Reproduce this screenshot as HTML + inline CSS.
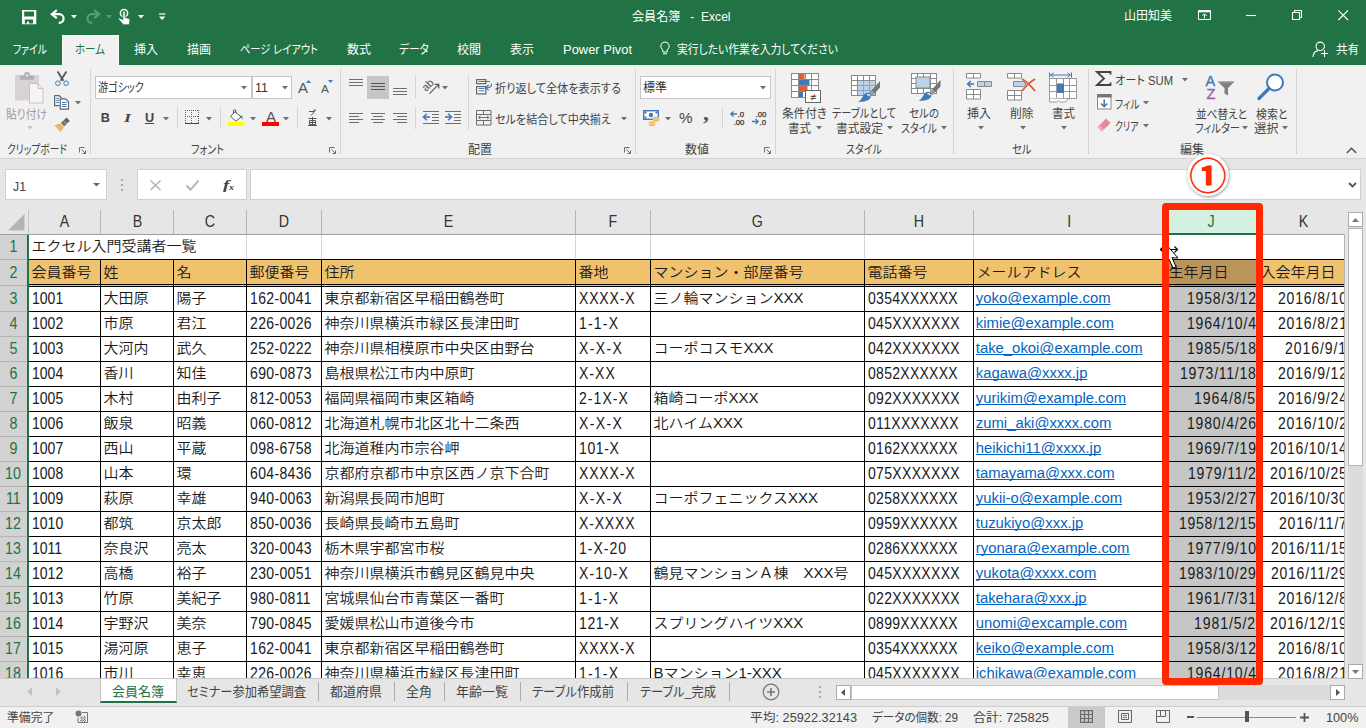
<!DOCTYPE html>
<html lang="ja"><head><meta charset="utf-8"><title>会員名簿 - Excel</title>
<style>
html,body{margin:0;padding:0}
body{width:1366px;height:728px;overflow:hidden;position:relative;background:#e6e6e6;font-family:"Liberation Sans","Noto Sans CJK JP",sans-serif;font-size:12px;color:#444}
.a{position:absolute;display:block}
.t{position:absolute;white-space:pre;transform-origin:0 50%;display:block;font-feature-settings:"palt"}
.k{display:inline-block;white-space:nowrap;vertical-align:baseline;text-align:left}
.k>span{display:inline-block;transform-origin:0 50%}
svg{overflow:visible}

#grid{position:absolute;left:0;top:210px;width:1344px;height:468px;overflow:hidden;background:#fff;font-family:"Liberation Sans","Noto Sans CJK JP",sans-serif;font-size:15px;color:#1a1a1a;font-weight:350}
#grid div{position:absolute;box-sizing:border-box;white-space:pre;overflow:hidden}
.ch{background:#e6e6e6;border-right:1px solid #b5b5b5;border-bottom:1px solid #9e9e9e;text-align:center;color:#333;font-size:15px;font-weight:400}
.rh{background:#d2d2d2;border-bottom:1px solid #b5b5b5;text-align:center;color:#217346;font-size:15px;font-weight:400;left:0;width:27px}
.c{border-right:1px solid #000;border-bottom:1px solid #000;padding-left:2.5px}
.h2{background:#f1c26e}
.r{text-align:right;padding-right:0.6px;padding-left:0}
.j{display:inline-block;transform:scaleY(.93);transform-origin:50% 58%}
.l{display:inline-block;font-size:16.2px;transform:scaleX(.866);transform-origin:0 50%;position:relative;top:0.4px}
.hy{display:inline-block;transform:scaleX(1.45)}
.sl{display:inline-block;transform:scaleX(1.5)}
.lc{display:inline-block;font-size:16.2px;transform:scaleX(.88)}
.lk{color:#0563c1}
.e{font-size:14.9px;text-decoration:underline;text-decoration-thickness:1px;text-underline-offset:0.9px;text-decoration-skip-ink:none;position:relative;top:0.3px;left:-0.7px;font-size:14.85px}
.sel{background:#c6c6c6}
</style></head>
<body>
<div class="a" style="left:0px;top:0px;width:1366px;height:65px;background:#217346;"></div>
<svg class="a" style="left:22px;top:9.7px;" width="14.3" height="14.3" viewBox="0 0 14.3 14.3"><path d="M0 0h14.300v14.300h-14.300z M2.200 1.600v5h9.800v-5z M2.800 9.500v3.900h2.200v-2h2v2h4v-3.900z" fill="#fff" fill-rule="evenodd"/></svg>
<svg class="a" style="left:50px;top:9px;" width="16" height="15" viewBox="0 0 16 15"><path d="M6.800 1.200L1.800 5.200L6.800 9.200" fill="none" stroke="#fff" stroke-width="2.200" stroke-linejoin="miter"/><path d="M3 5.200h6.300a4.300 4.300 0 0 1 0 8.600h-0.600" fill="none" stroke="#fff" stroke-width="2.200"/></svg>
<svg class="a" style="left:70.7px;top:14.8px;" width="6" height="4" viewBox="0 0 6 4"><path d="M0 0h6l-3.0 3.5z" fill="#fff"/></svg>
<svg class="a" style="left:85px;top:9px;" width="16" height="15" viewBox="0 0 16 15"><path d="M9.200 1.200L14.200 5.200L9.200 9.200" fill="none" stroke="#5b9a77" stroke-width="2.200"/><path d="M13 5.200h-6.300a4.300 4.300 0 0 0 0 8.600h0.600" fill="none" stroke="#5b9a77" stroke-width="2.200"/></svg>
<svg class="a" style="left:105.6px;top:14.8px;" width="6" height="4" viewBox="0 0 6 4"><path d="M0 0h6l-3.0 3.5z" fill="#5b9a77"/></svg>
<svg class="a" style="left:117px;top:8px;" width="14" height="18" viewBox="0 0 14 18"><circle cx="7" cy="5.2" r="3.6" fill="none" stroke="#fff" stroke-width="1.5"/><path d="M5.8 4.2a1.2 1.2 0 0 1 2.4 0v5.2l3.6 1.1c.8.3 1.2.9 1.1 1.7l-.6 4.6h-6l-4.6-5.6c-.4-.6.2-1.4 1-1.1l3.1 1.6z" fill="#fff" stroke="#217346" stroke-width="0.8"/></svg>
<svg class="a" style="left:137.7px;top:14.8px;" width="6" height="4" viewBox="0 0 6 4"><path d="M0 0h6l-3.0 3.5z" fill="#fff"/></svg>
<svg class="a" style="left:158px;top:13px;" width="8" height="8" viewBox="0 0 8 8"><path d="M1 1h6.4" stroke="#fff" stroke-width="1.2"/><path d="M1 3.5h6.4l-3.2 3.4z" fill="#fff"/></svg>
<span id="L0" class="t" style="left:632px;top:4.600000000000001px;height:24.4px;line-height:24.4px;font-size:12.2px;color:#fff;transform:scaleX(0.990);">会員名簿   -  Excel</span>
<span id="L1" class="t" style="left:1124px;top:3.5px;height:24px;line-height:24px;font-size:12px;color:#fff;">山田知美</span>
<svg class="a" style="left:1198px;top:10px;" width="13" height="10" viewBox="0 0 13 10"><path d="M0.500 0.500h12v9h-12z" fill="none" stroke="#fff"/><path d="M0.500 1.500h12" stroke="#fff" stroke-width="1.600"/><path d="M6.500 8.500v-4.500 M4.300 6l2.200-2.200l2.200 2.200" fill="none" stroke="#fff"/></svg>
<svg class="a" style="left:1246px;top:15px;" width="10" height="1" viewBox="0 0 10 1"><path d="M0 .5h10" stroke="#fff" stroke-width="1.100"/></svg>
<svg class="a" style="left:1292px;top:10px;" width="10" height="10" viewBox="0 0 10 10"><path d="M0.500 2.500h7v7h-7z" fill="none" stroke="#fff" stroke-width="1.100"/><path d="M2.500 2.500v-2h7v7h-2" fill="none" stroke="#fff" stroke-width="1.100"/></svg>
<svg class="a" style="left:1338px;top:10px;" width="10" height="10" viewBox="0 0 10 10"><path d="M0.300 0.300l9.700 9.700 M10 0.300l-9.700 9.700" stroke="#fff" stroke-width="1.100"/></svg>
<div class="a" style="left:62px;top:35px;width:57px;height:30px;background:#f1f1f1;border:1px solid #fbfbfb;border-bottom:none;box-sizing:border-box"></div>
<span id="L2" class="t" style="left:13px;top:37.5px;height:24px;line-height:24px;font-size:12px;color:#fff;transform:scaleX(0.818);">ファイル</span>
<span id="L3" class="t" style="left:134px;top:37.5px;height:24px;line-height:24px;font-size:12px;color:#fff;">挿入</span>
<span id="L4" class="t" style="left:187px;top:37.5px;height:24px;line-height:24px;font-size:12px;color:#fff;">描画</span>
<span id="L5" class="t" style="left:240px;top:37.5px;height:24px;line-height:24px;font-size:12px;color:#fff;transform:scaleX(0.855);">ページ レイアウト</span>
<span id="L6" class="t" style="left:347px;top:37.5px;height:24px;line-height:24px;font-size:12px;color:#fff;">数式</span>
<span id="L7" class="t" style="left:399px;top:37.5px;height:24px;line-height:24px;font-size:12px;color:#fff;transform:scaleX(0.894);">データ</span>
<span id="L8" class="t" style="left:457px;top:37.5px;height:24px;line-height:24px;font-size:12px;color:#fff;">校閲</span>
<span id="L9" class="t" style="left:510px;top:37.5px;height:24px;line-height:24px;font-size:12px;color:#fff;">表示</span>
<span id="L10" class="t" style="left:75px;top:37.5px;height:24px;line-height:24px;font-size:12px;color:#217346;transform:scaleX(0.874);">ホーム</span>
<span id="L11" class="t" style="left:563px;top:37.5px;height:24px;line-height:24px;font-size:12px;color:#fff;transform:scaleX(1.078);">Power Pivot</span>
<svg class="a" style="left:659px;top:41px;" width="12" height="15" viewBox="0 0 12 15"><path d="M6 1a4.2 4.2 0 0 0-2.2 7.8v2.2h4.4v-2.2a4.2 4.2 0 0 0-2.2-7.8z" fill="none" stroke="#fff" stroke-width="1"/><path d="M4 12.8h4" stroke="#fff" stroke-width="1"/></svg>
<span id="L12" class="t" style="left:677px;top:37.5px;height:24px;line-height:24px;font-size:12px;color:#fff;transform:scaleX(0.900);">実行したい作業を入力してください</span>
<svg class="a" style="left:1312px;top:41px;" width="17" height="17" viewBox="0 0 17 17"><circle cx="8.200" cy="5.300" r="4.200" fill="none" stroke="#fff" stroke-width="1.100"/><path d="M1 16c.3-3.800 2.300-6 5.200-6.400" fill="none" stroke="#fff" stroke-width="1.100"/><path d="M12.500 9v7 M9 12.500h7" stroke="#fff" stroke-width="1.100"/></svg>
<span id="L13" class="t" style="left:1336px;top:37.5px;height:24px;line-height:24px;font-size:12px;color:#fff;transform:scaleX(0.958);">共有</span>
<div class="a" style="left:0px;top:65px;width:1366px;height:93px;background:#f1f1f1;"></div>
<div class="a" style="left:0px;top:158px;width:1366px;height:1px;background:#d2d2d2;"></div>
<svg class="a" style="left:15px;top:72px;" width="30" height="32" viewBox="0 0 30 32"><rect x="0" y="3" width="24" height="25.5" rx="1" fill="#d6d2d6"/><path d="M5 3.600h4.200v-1.200a2.800 2.400 0 0 1 5.600 0v1.200h4.200v4.200h-14z" fill="#b4b0b4"/><circle cx="12" cy="3.400" r="1.100" fill="#f1f1f1"/><path d="M14.5 11.5h8.5l5 5v14.5h-13.5z" fill="#f7f3f7" stroke="#c6c2c6" stroke-width="1"/><path d="M23 11.5v5h5" fill="none" stroke="#c6c2c6" stroke-width="1"/></svg>
<span id="L14" class="t" style="left:6px;top:102.5px;height:24px;line-height:24px;font-size:12px;color:#9c9c9c;transform:scaleX(0.897);">貼り付け</span>
<svg class="a" style="left:26.5px;top:125.9px;" width="6" height="4" viewBox="0 0 6 4"><path d="M0 0h6l-3.0 3.5z" fill="#c4c4c4"/></svg>
<svg class="a" style="left:54px;top:71px;" width="16" height="16" viewBox="0 0 16 16"><path d="M3.600 0.500l5.800 9.300 M12.400 0.500l-5.800 9.300" stroke="#5a5a5a" stroke-width="1.900" fill="none"/><circle cx="3.900" cy="12.200" r="2.300" fill="none" stroke="#4179b8" stroke-width="1"/><circle cx="12.100" cy="12.200" r="2.300" fill="none" stroke="#4179b8" stroke-width="1"/></svg>
<svg class="a" style="left:54px;top:95px;" width="16" height="15" viewBox="0 0 16 15"><path d="M0.600 0.600h4.400l2 2v1 M0.600 0.600v10h5" fill="none" stroke="#666" stroke-width="1.200"/><path d="M6.300 3.800h5.200l3 3v7.300h-8.200z" fill="#fff" stroke="#666" stroke-width="1.200"/><path d="M2.300 3.500h2.500 M2.300 5.500h2.500 M2.300 7.500h2.500 M8 7.500h4.500 M8 9.500h4.500 M8 11.500h4.500" stroke="#4179b8" stroke-width="1"/></svg>
<svg class="a" style="left:75.3px;top:101.0px;" width="6" height="4" viewBox="0 0 6 4"><path d="M0 0h6l-3.0 3.5z" fill="#6e6e6e"/></svg>
<svg class="a" style="left:54px;top:117px;" width="17" height="16" viewBox="0 0 17 16"><path d="M9.5 3.2l3.3-2.7l3 3.6l-3.3 2.7z" fill="#666"/><path d="M6.8 5.8l2.6-2.2l3.2 3.8l-2.6 2.2z" fill="#777"/><path d="M6.2 6.2l3.8 4.5l-3.6 4.3l-6-6.8z" fill="#e9b76a"/></svg>
<span id="L15" class="t" style="left:7px;top:137.5px;height:24px;line-height:24px;font-size:12px;color:#444;transform:scaleX(0.811);">クリップボード</span>
<svg class="a" style="left:79px;top:147px;" width="7" height="7" viewBox="0 0 7 7"><path d="M0.5 5.5v-5h5" fill="none" stroke="#6e6e6e" stroke-width="1"/><path d="M2.5 2.5l4 4 M6.5 3.5v3h-3" fill="none" stroke="#6e6e6e" stroke-width="1"/></svg>
<div class="a" style="left:90px;top:69px;width:1px;height:85px;background:#d4d4d4;"></div>
<div class="a" style="left:95px;top:76px;width:157px;height:23px;background:#fff;border:1px solid #c6c6c6;box-sizing:border-box"></div>
<div class="a" style="left:252px;top:76px;width:40px;height:23px;background:#fff;border:1px solid #c6c6c6;box-sizing:border-box"></div>
<span id="L16" class="t" style="left:98px;top:75.5px;height:24px;line-height:24px;font-size:12px;color:#333;transform:scaleX(0.843);">游ゴシック</span>
<svg class="a" style="left:241.4px;top:85.9px;" width="6" height="4" viewBox="0 0 6 4"><path d="M0 0h6l-3.0 3.5z" fill="#6e6e6e"/></svg>
<span id="L17" class="t" style="left:255px;top:74.5px;height:26px;line-height:26px;font-size:13px;color:#333;transform:scaleX(0.963);">11</span>
<svg class="a" style="left:281.5px;top:85.9px;" width="6" height="4" viewBox="0 0 6 4"><path d="M0 0h6l-3.0 3.5z" fill="#6e6e6e"/></svg>
<span id="L18" class="t" style="left:298px;top:73.5px;height:28px;line-height:28px;font-size:14px;color:#555;transform:scaleX(1.070);">A</span>
<svg class="a" style="left:306px;top:80px;" width="5" height="3" viewBox="0 0 5 3"><path d="M0 3l2.5-3l2.5 3z" fill="#4179b8"/></svg>
<span id="L19" class="t" style="left:321px;top:77.5px;height:22px;line-height:22px;font-size:11px;color:#555;transform:scaleX(1.089);">A</span>
<svg class="a" style="left:327.5px;top:80px;" width="5" height="3" viewBox="0 0 5 3"><path d="M0 0h5l-2.5 3z" fill="#4179b8"/></svg>
<span id="L20" class="t" style="left:100.8px;top:106.1px;height:25.4px;line-height:25.4px;font-size:12.7px;color:#444;font-weight:700;">B</span>
<span id="L21" class="t" style="left:124px;top:106.1px;height:25.4px;line-height:25.4px;font-size:12.7px;color:#444;transform:scaleX(1.418);font-style:italic;font-family:'Liberation Serif',serif;font-weight:700;">I</span>
<span id="L22" class="t" style="left:144.9px;top:106.1px;height:25.4px;line-height:25.4px;font-size:12.7px;color:#444;font-weight:700;text-decoration:underline;text-underline-offset:1.2px;text-decoration-thickness:1px;">U</span>
<svg class="a" style="left:163.0px;top:116.5px;" width="6" height="4" viewBox="0 0 6 4"><path d="M0 0h6l-3.0 3.5z" fill="#6e6e6e"/></svg>
<div class="a" style="left:177px;top:107px;width:1px;height:22px;background:#d4d4d4;"></div>
<svg class="a" style="left:185px;top:110px;" width="15" height="15" viewBox="0 0 15 15"><path d="M0 0.5h14 M0.5 0v13 M13.5 0v13 M6.500 0v13 M0 6.5h14" stroke="#666" stroke-width="1" stroke-dasharray="1 1" fill="none" shape-rendering="crispEdges"/><path d="M0 13.5h14" stroke="#444" stroke-width="1"/></svg>
<svg class="a" style="left:206.4px;top:116.5px;" width="6" height="4" viewBox="0 0 6 4"><path d="M0 0h6l-3.0 3.5z" fill="#6e6e6e"/></svg>
<div class="a" style="left:220px;top:107px;width:1px;height:22px;background:#d4d4d4;"></div>
<svg class="a" style="left:228px;top:109px;" width="17" height="18" viewBox="0 0 17 18"><path d="M7 2.6l6 5.4l-5.2 4.2l-5.2-4.8z" fill="#fff" stroke="#555" stroke-width="1"/><path d="M5.5 4.2v-2.2a1.2 1.2 0 0 1 2.4 0v2" fill="none" stroke="#555" stroke-width="1"/><path d="M13 6.2c1.6.8 2 2.6 1.2 4.6c-.2-1.600-.8-2.600-2-3.400z" fill="#4179b8"/><rect x="0" y="13" width="16.5" height="4" fill="#ffff00"/></svg>
<svg class="a" style="left:249.5px;top:116.5px;" width="6" height="4" viewBox="0 0 6 4"><path d="M0 0h6l-3.0 3.5z" fill="#6e6e6e"/></svg>
<span id="L23" class="t" style="left:265.5px;top:103.0px;height:28px;line-height:28px;font-size:14px;color:#555;transform:scaleX(1.070);">A</span>
<div class="a" style="left:262px;top:122px;width:16.5px;height:4px;background:#ff0000;"></div>
<svg class="a" style="left:283.4px;top:116.5px;" width="6" height="4" viewBox="0 0 6 4"><path d="M0 0h6l-3.0 3.5z" fill="#6e6e6e"/></svg>
<div class="a" style="left:297px;top:107px;width:1px;height:22px;background:#d4d4d4;"></div>
<svg class="a" style="left:308px;top:110px;" width="9" height="16" viewBox="0 0 9 16"><path d="M1 1.500h5.500l-3.500 4 M5.500 0l2.500-.0" stroke="#555" stroke-width="1" fill="none"/><path d="M7.500.5l-1.500 1.500" stroke="#555" stroke-width="1"/><path d="M0.500 8.500h8 M1.500 10.500h6v4h-6z M4.500 7v8.500 M1.500 12.500h6 M0 15.500h9" stroke="#555" stroke-width="1" fill="none"/></svg>
<svg class="a" style="left:326.4px;top:116.5px;" width="6" height="4" viewBox="0 0 6 4"><path d="M0 0h6l-3.0 3.5z" fill="#6e6e6e"/></svg>
<span id="L24" class="t" style="left:191px;top:138.0px;height:24px;line-height:24px;font-size:12px;color:#444;transform:scaleX(0.840);">フォント</span>
<svg class="a" style="left:329px;top:147px;" width="7" height="7" viewBox="0 0 7 7"><path d="M0.5 5.5v-5h5" fill="none" stroke="#6e6e6e" stroke-width="1"/><path d="M2.5 2.5l4 4 M6.5 3.5v3h-3" fill="none" stroke="#6e6e6e" stroke-width="1"/></svg>
<div class="a" style="left:340px;top:69px;width:1px;height:85px;background:#d4d4d4;"></div>
<div class="a" style="left:367px;top:76px;width:22px;height:23px;background:#c6c6c6;"></div>
<svg class="a" style="left:349px;top:76px;" width="14" height="23" viewBox="0 0 14 23"><path d="M0 3.5h14" stroke="#6e6e6e" stroke-width="1"/><path d="M0 6.5h14" stroke="#6e6e6e" stroke-width="1"/><path d="M0 9.5h14" stroke="#6e6e6e" stroke-width="1"/></svg>
<svg class="a" style="left:371px;top:76px;" width="14" height="23" viewBox="0 0 14 23"><path d="M0 7.5h14" stroke="#555" stroke-width="1"/><path d="M0 10.5h14" stroke="#555" stroke-width="1"/><path d="M0 13.5h14" stroke="#555" stroke-width="1"/></svg>
<svg class="a" style="left:393px;top:76px;" width="14" height="23" viewBox="0 0 14 23"><path d="M0 12.5h14" stroke="#6e6e6e" stroke-width="1"/><path d="M0 15.5h14" stroke="#6e6e6e" stroke-width="1"/><path d="M0 18.5h14" stroke="#6e6e6e" stroke-width="1"/></svg>
<div class="a" style="left:415px;top:76px;width:1px;height:22px;background:#d4d4d4;"></div>
<svg class="a" style="left:422px;top:78px;" width="18" height="17" viewBox="0 0 18 17"><path d="M7.500 15.700l9-9 M12.800 6.400h4v4" fill="none" stroke="#555" stroke-width="1.200"/><g transform="rotate(-45 6.500 8)"><text x="0.500" y="10.500" font-size="11" font-family="Liberation Sans, sans-serif" fill="#555">ab</text></g></svg>
<svg class="a" style="left:442.4px;top:85.8px;" width="6" height="4" viewBox="0 0 6 4"><path d="M0 0h6l-3.0 3.5z" fill="#6e6e6e"/></svg>
<div class="a" style="left:468px;top:75px;width:1px;height:55px;background:#d4d4d4;"></div>
<svg class="a" style="left:476px;top:78px;" width="17" height="17" viewBox="0 0 17 17"><path d="M0.600 1.600h9.200v4h-9.200z M0.600 8.600h9.200v7.200h-9.200z" fill="#fff" stroke="#666" stroke-width="1.200"/><path d="M2.500 3.500h11.500 M2.500 10.500h6 M2.500 12.800h6" stroke="#4179b8" stroke-width="1"/><path d="M15.500 5.500c.3 3-1.500 4.200-5 4.200" fill="none" stroke="#4179b8" stroke-width="1.100"/><path d="M12.600 7l-2.800 2.700l2.800 2.500" fill="none" stroke="#4179b8" stroke-width="1.300"/></svg>
<span id="L25" class="t" style="left:495px;top:77.0px;height:24px;line-height:24px;font-size:12px;color:#444;transform:scaleX(0.930);">折り返して全体を表示する</span>
<svg class="a" style="left:349px;top:110px;" width="14" height="16" viewBox="0 0 14 16"><path d="M0 3.5h14" stroke="#6e6e6e" stroke-width="1"/><path d="M0 6.5h10" stroke="#6e6e6e" stroke-width="1"/><path d="M0 9.5h14" stroke="#6e6e6e" stroke-width="1"/><path d="M0 12.5h10" stroke="#6e6e6e" stroke-width="1"/></svg>
<svg class="a" style="left:371px;top:110px;" width="14" height="16" viewBox="0 0 14 16"><path d="M0.0 3.5h14" stroke="#6e6e6e" stroke-width="1"/><path d="M2.0 6.5h10" stroke="#6e6e6e" stroke-width="1"/><path d="M0.0 9.5h14" stroke="#6e6e6e" stroke-width="1"/><path d="M2.0 12.5h10" stroke="#6e6e6e" stroke-width="1"/></svg>
<svg class="a" style="left:393px;top:110px;" width="14" height="16" viewBox="0 0 14 16"><path d="M0 3.5h14" stroke="#6e6e6e" stroke-width="1"/><path d="M4 6.5h10" stroke="#6e6e6e" stroke-width="1"/><path d="M0 9.5h14" stroke="#6e6e6e" stroke-width="1"/><path d="M4 12.5h10" stroke="#6e6e6e" stroke-width="1"/></svg>
<div class="a" style="left:415px;top:107px;width:1px;height:22px;background:#d4d4d4;"></div>
<svg class="a" style="left:423px;top:110px;" width="17" height="15" viewBox="0 0 17 15"><path d="M0 1.500h16 M9 4.500h7 M9 7.500h7 M9 10.500h7 M0 13.500h16" stroke="#6e6e6e" stroke-width="1"/><path d="M7 7h-6" stroke="#4179b8" stroke-width="1.600"/><path d="M3.800 3.800l-3.300 3.200l3.300 3.200" fill="none" stroke="#4179b8" stroke-width="1.600"/></svg>
<svg class="a" style="left:445px;top:110px;" width="17" height="15" viewBox="0 0 17 15"><path d="M0 1.500h16 M9 4.500h7 M9 7.500h7 M9 10.500h7 M0 13.500h16" stroke="#6e6e6e" stroke-width="1"/><path d="M0 7h6" stroke="#4179b8" stroke-width="1.600"/><path d="M3.200 3.800l3.300 3.200l-3.300 3.200" fill="none" stroke="#4179b8" stroke-width="1.600"/></svg>
<svg class="a" style="left:476px;top:110px;" width="16" height="16" viewBox="0 0 16 16"><path d="M0.500 0.500h14.500v14.500h-14.500z M0.500 4.500h14.500 M0.500 10.500h14.500 M7.500 0.500v4 M7.500 10.500v4.500" fill="none" stroke="#6e6e6e" stroke-width="1"/><path d="M2.500 7.500h10.500 M4.500 5.700l-2 1.800l2 1.800 M11 5.700l2 1.800l-2 1.800" fill="none" stroke="#4179b8" stroke-width="1"/></svg>
<span id="L26" class="t" style="left:495px;top:107.5px;height:24px;line-height:24px;font-size:12px;color:#444;transform:scaleX(0.925);">セルを結合して中央揃え</span>
<svg class="a" style="left:620.5px;top:116.5px;" width="6" height="4" viewBox="0 0 6 4"><path d="M0 0h6l-3.0 3.5z" fill="#6e6e6e"/></svg>
<span id="L27" class="t" style="left:468px;top:138.0px;height:24px;line-height:24px;font-size:12px;color:#444;">配置</span>
<svg class="a" style="left:624px;top:147px;" width="7" height="7" viewBox="0 0 7 7"><path d="M0.5 5.5v-5h5" fill="none" stroke="#6e6e6e" stroke-width="1"/><path d="M2.5 2.5l4 4 M6.5 3.5v3h-3" fill="none" stroke="#6e6e6e" stroke-width="1"/></svg>
<div class="a" style="left:635px;top:69px;width:1px;height:85px;background:#d4d4d4;"></div>
<div class="a" style="left:640px;top:76px;width:131px;height:23px;background:#fff;border:1px solid #c6c6c6;box-sizing:border-box"></div>
<span id="L28" class="t" style="left:643px;top:76.0px;height:24px;line-height:24px;font-size:12px;color:#333;">標準</span>
<svg class="a" style="left:760.3px;top:85.9px;" width="6" height="4" viewBox="0 0 6 4"><path d="M0 0h6l-3.0 3.5z" fill="#6e6e6e"/></svg>
<svg class="a" style="left:643px;top:110px;" width="17" height="17" viewBox="0 0 17 17"><rect x="0.700" y="0.700" width="14.600" height="8.600" fill="#fff" stroke="#4179b8" stroke-width="1.400"/><circle cx="8" cy="5" r="2.200" fill="#4179b8"/><rect x="1.500" y="1.500" width="2" height="2" fill="#4179b8"/><rect x="12.500" y="1.500" width="2" height="2" fill="#4179b8"/><rect x="1.500" y="6.500" width="2" height="2" fill="#4179b8"/><ellipse cx="13" cy="8" rx="3.500" ry="1.500" fill="#eab765"/><ellipse cx="13" cy="10.300" rx="3.500" ry="1.500" fill="#eab765" stroke="#f1f1f1" stroke-width=".5"/><ellipse cx="9" cy="12.500" rx="3.500" ry="1.500" fill="#eab765" stroke="#f1f1f1" stroke-width=".5"/><ellipse cx="9" cy="14.800" rx="3.500" ry="1.500" fill="#eab765" stroke="#f1f1f1" stroke-width=".5"/></svg>
<svg class="a" style="left:664.6px;top:116.5px;" width="6" height="4" viewBox="0 0 6 4"><path d="M0 0h6l-3.0 3.5z" fill="#6e6e6e"/></svg>
<span id="L29" class="t" style="left:679px;top:103.9px;height:29.2px;line-height:29.2px;font-size:14.6px;color:#444;transform:scaleX(1.040);">%</span>
<span id="L30" class="t" style="left:703px;top:90.5px;height:44px;line-height:44px;font-size:22px;color:#555;font-weight:700;transform:scaleX(1.091);font-family:'Liberation Serif',serif;">,</span>
<div class="a" style="left:722px;top:107px;width:1px;height:22px;background:#d4d4d4;"></div>
<svg class="a" style="left:730px;top:110px;" width="15" height="16" viewBox="0 0 15 16"><path d="M7 4h-6 M3.500 1.500l-2.700 2.500l2.700 2.500" fill="none" stroke="#4179b8" stroke-width="1.300"/><text x="7.500" y="7" font-size="7.800" font-family="Liberation Sans, sans-serif" fill="#333" stroke="#333" stroke-width=".25">.0</text><text x="3.500" y="14.500" font-size="7.800" font-family="Liberation Sans, sans-serif" fill="#333" stroke="#333" stroke-width=".25">.00</text></svg>
<svg class="a" style="left:752px;top:110px;" width="15" height="16" viewBox="0 0 15 16"><path d="M0 11.500h6 M3.500 9l2.700 2.500l-2.700 2.500" fill="none" stroke="#4179b8" stroke-width="1.300"/><text x="3.500" y="7" font-size="7.800" font-family="Liberation Sans, sans-serif" fill="#333" stroke="#333" stroke-width=".25">.00</text><text x="7.500" y="14.500" font-size="7.800" font-family="Liberation Sans, sans-serif" fill="#333" stroke="#333" stroke-width=".25">.0</text></svg>
<span id="L31" class="t" style="left:685px;top:138.0px;height:24px;line-height:24px;font-size:12px;color:#444;">数値</span>
<svg class="a" style="left:764px;top:147px;" width="7" height="7" viewBox="0 0 7 7"><path d="M0.5 5.5v-5h5" fill="none" stroke="#6e6e6e" stroke-width="1"/><path d="M2.5 2.5l4 4 M6.5 3.5v3h-3" fill="none" stroke="#6e6e6e" stroke-width="1"/></svg>
<div class="a" style="left:775px;top:69px;width:1px;height:85px;background:#d4d4d4;"></div>
<svg class="a" style="left:791px;top:73px;" width="31" height="31" viewBox="0 0 31 31"><rect x="0.500" y="0.500" width="27" height="24" fill="#fff" stroke="#8a8a8a"/><path d="M7.5 0.500v24" stroke="#8a8a8a" stroke-width="1"/><path d="M14.5 0.500v24" stroke="#8a8a8a" stroke-width="1"/><path d="M20.5 0.500v24" stroke="#8a8a8a" stroke-width="1"/><path d="M0.500 6.5h27" stroke="#8a8a8a" stroke-width="1"/><path d="M0.500 12.5h27" stroke="#8a8a8a" stroke-width="1"/><path d="M0.500 18.5h27" stroke="#8a8a8a" stroke-width="1"/><rect x="8" y="1" width="5.500" height="5" fill="#d9603b"/><rect x="8" y="7" width="10.500" height="5" fill="#4179b8"/><rect x="8" y="13" width="8.500" height="5" fill="#d9603b"/><rect x="8" y="19" width="4" height="5" fill="#4179b8"/><rect x="14.500" y="17.500" width="15" height="12" fill="#fff" stroke="#666"/><text x="22" y="28" text-anchor="middle" font-size="11" font-family="Liberation Sans, sans-serif" fill="#333">≠</text></svg>
<span id="L32" class="t" style="left:782px;top:102.0px;height:24px;line-height:24px;font-size:12px;color:#444;transform:scaleX(0.968);">条件付き</span>
<span id="L33" class="t" style="left:788px;top:116.5px;height:24px;line-height:24px;font-size:12px;color:#444;transform:scaleX(0.958);">書式</span>
<svg class="a" style="left:815.6px;top:125.8px;" width="6" height="4" viewBox="0 0 6 4"><path d="M0 0h6l-3.0 3.5z" fill="#6e6e6e"/></svg>
<svg class="a" style="left:851px;top:75px;" width="30" height="28" viewBox="0 0 30 28"><rect x="0.500" y="0.500" width="24" height="20" fill="#fff" stroke="#8a8a8a"/><path d="M6.5 0.500v20" stroke="#8a8a8a" stroke-width="1"/><path d="M12.5 0.500v20" stroke="#8a8a8a" stroke-width="1"/><path d="M18.5 0.500v20" stroke="#8a8a8a" stroke-width="1"/><path d="M0.500 5.5h24" stroke="#8a8a8a" stroke-width="1"/><path d="M0.500 10.5h24" stroke="#8a8a8a" stroke-width="1"/><path d="M0.500 15.5h24" stroke="#8a8a8a" stroke-width="1"/><rect x="7" y="6" width="17" height="14" fill="#bcd2ea"/><path d="M12.500 6v14" stroke="#8aa7c8" stroke-width="1"/><path d="M18.500 6v14" stroke="#8aa7c8" stroke-width="1"/><path d="M7 10.500h17" stroke="#8aa7c8" stroke-width="1"/><path d="M7 15.500h17" stroke="#8aa7c8" stroke-width="1"/><g transform="translate(7 6)"><path d="M13.500 9.500l8.500-9.500v6.500l-5.500 6z" fill="#777"/><path d="M11.200 12l2.300-2.500l3 3l-2.300 2.500z" fill="#9a9a9a"/><path d="M0 21c3.500-1.500 4.200-6 7.200-8.500c2.200-1.800 5.300-.5 5.800 1.800c.6 3.400-3 6.700-13 6.700z" fill="#4179b8"/><path d="M9 13.800c1.400-.3 2.500.4 2.800 1.500" stroke="#fff" stroke-width="1.300" fill="none"/></g></svg>
<span id="L34" class="t" style="left:832px;top:102.0px;height:24px;line-height:24px;font-size:12px;color:#444;transform:scaleX(0.852);">テーブルとして</span>
<span id="L35" class="t" style="left:836px;top:116.5px;height:24px;line-height:24px;font-size:12px;color:#444;transform:scaleX(0.979);">書式設定</span>
<svg class="a" style="left:887.4px;top:125.8px;" width="6" height="4" viewBox="0 0 6 4"><path d="M0 0h6l-3.0 3.5z" fill="#6e6e6e"/></svg>
<svg class="a" style="left:911px;top:73px;" width="30" height="28" viewBox="0 0 30 28"><rect x="0.500" y="0.500" width="25" height="20" fill="#fff" stroke="#8a8a8a"/><path d="M6.5 0.500v20" stroke="#8a8a8a" stroke-width="1"/><path d="M12.5 0.500v20" stroke="#8a8a8a" stroke-width="1"/><path d="M19.5 0.500v20" stroke="#8a8a8a" stroke-width="1"/><path d="M0.500 5.5h25" stroke="#8a8a8a" stroke-width="1"/><path d="M0.500 10.5h25" stroke="#8a8a8a" stroke-width="1"/><path d="M0.500 15.5h25" stroke="#8a8a8a" stroke-width="1"/><rect x="5" y="4" width="14" height="11" fill="#bcd2ea" stroke="#8a8a8a"/><g transform="translate(7.5 7)"><path d="M13.500 9.500l8.500-9.500v6.500l-5.500 6z" fill="#777"/><path d="M11.200 12l2.300-2.500l3 3l-2.300 2.500z" fill="#9a9a9a"/><path d="M0 21c3.500-1.500 4.200-6 7.200-8.500c2.200-1.800 5.300-.5 5.800 1.800c.6 3.400-3 6.700-13 6.700z" fill="#4179b8"/><path d="M9 13.800c1.400-.3 2.500.4 2.800 1.500" stroke="#fff" stroke-width="1.300" fill="none"/></g></svg>
<span id="L36" class="t" style="left:909px;top:102.0px;height:24px;line-height:24px;font-size:12px;color:#444;transform:scaleX(0.876);">セルの</span>
<span id="L37" class="t" style="left:901px;top:116.5px;height:24px;line-height:24px;font-size:12px;color:#444;transform:scaleX(0.835);">スタイル</span>
<svg class="a" style="left:940.6px;top:125.8px;" width="6" height="4" viewBox="0 0 6 4"><path d="M0 0h6l-3.0 3.5z" fill="#6e6e6e"/></svg>
<span id="L38" class="t" style="left:846px;top:138.0px;height:24px;line-height:24px;font-size:12px;color:#444;transform:scaleX(0.835);">スタイル</span>
<div class="a" style="left:953px;top:69px;width:1px;height:85px;background:#d4d4d4;"></div>
<svg class="a" style="left:966px;top:73px;" width="27" height="27" viewBox="0 0 27 27"><g fill="#fff" stroke="#8a8a8a"><path d="M0.500 0.500h14v4.500h-14z M7.500 0.500v4.500"/><path d="M0.500 16.500h14v9.500h-14z M7.500 16.500v9.500 M0.500 21.500h14"/></g><path d="M11.500 8.500h14v5h-14z M18.500 8.500v5" fill="#bcd2ea" stroke="#8a8a8a"/><path d="M8 11h-6" stroke="#4179b8" stroke-width="1.600"/><path d="M4.800 8l-3.200 3l3.200 3" fill="none" stroke="#4179b8" stroke-width="1.600"/></svg>
<span id="L39" class="t" style="left:967px;top:102.0px;height:24px;line-height:24px;font-size:12px;color:#444;">挿入</span>
<svg class="a" style="left:977.5px;top:125.8px;" width="6" height="4" viewBox="0 0 6 4"><path d="M0 0h6l-3.0 3.5z" fill="#6e6e6e"/></svg>
<svg class="a" style="left:1007px;top:73px;" width="30" height="28" viewBox="0 0 30 28"><g fill="#fff" stroke="#8a8a8a"><path d="M0.500 0.500h14v4.500h-14z M7.500 0.500v4.500"/><path d="M0.500 17.500h14v9.500h-14z M7.500 17.500v9.500 M0.500 22.500h14"/></g><path d="M6.500 8.500h10l2.500 2.500l-2.500 2.500h-10z" fill="#bcd2ea" stroke="#8a8a8a"/><path d="M15 6c5 3 9 7 13 12 M28 6c-5 3-9 7-13 12" fill="none" stroke="#d9603b" stroke-width="2"/></svg>
<span id="L40" class="t" style="left:1009.5px;top:102.0px;height:24px;line-height:24px;font-size:12px;color:#444;transform:scaleX(0.979);">削除</span>
<svg class="a" style="left:1019.5px;top:125.8px;" width="6" height="4" viewBox="0 0 6 4"><path d="M0 0h6l-3.0 3.5z" fill="#6e6e6e"/></svg>
<svg class="a" style="left:1049px;top:72px;" width="28" height="32" viewBox="0 0 28 32"><path d="M0.500 0.500v5 M22.500 0.500v5 M1.500 3h20 M4.500 0.800l-2.800 2.200l2.800 2.200 M18.500 0.800l2.800 2.200l-2.800 2.200" fill="none" stroke="#4179b8" stroke-width="1"/><g transform="translate(0 6)"><rect x="0.500" y="0.500" width="27" height="20" fill="#fff" stroke="#9a9a9a"/><path d="M7.5 0.500v20" stroke="#9a9a9a" stroke-width="1"/><path d="M14.5 0.500v20" stroke="#9a9a9a" stroke-width="1"/><path d="M20.5 0.500v20" stroke="#9a9a9a" stroke-width="1"/><path d="M0.500 7.5h27" stroke="#9a9a9a" stroke-width="1"/><path d="M0.500 13.5h27" stroke="#9a9a9a" stroke-width="1"/><rect x="8" y="5.500" width="7" height="9.500" fill="#4179b8"/><path d="M0.500 20.500v3.500h7l2-1.500l2 1.500h5l2.500-3" fill="#fff" stroke="#9a9a9a"/></g></svg>
<span id="L41" class="t" style="left:1051.5px;top:102.0px;height:24px;line-height:24px;font-size:12px;color:#444;transform:scaleX(0.958);">書式</span>
<svg class="a" style="left:1061.4px;top:125.8px;" width="6" height="4" viewBox="0 0 6 4"><path d="M0 0h6l-3.0 3.5z" fill="#6e6e6e"/></svg>
<span id="L42" class="t" style="left:1011.5px;top:138.0px;height:24px;line-height:24px;font-size:12px;color:#444;transform:scaleX(0.861);">セル</span>
<div class="a" style="left:1088px;top:69px;width:1px;height:85px;background:#d4d4d4;"></div>
<svg class="a" style="left:1096px;top:71px;" width="16" height="15" viewBox="0 0 16 15"><path d="M14.500 3.500v-2.500h-13.500l7 6.500l-7 6.500h13.500v-2.500" fill="none" stroke="#444" stroke-width="1.800"/></svg>
<span id="L43" class="t" style="left:1115px;top:69.0px;height:24px;line-height:24px;font-size:12px;color:#444;transform:scaleX(0.934);">オート SUM</span>
<svg class="a" style="left:1182.2px;top:78.0px;" width="6" height="4" viewBox="0 0 6 4"><path d="M0 0h6l-3.0 3.5z" fill="#6e6e6e"/></svg>
<svg class="a" style="left:1097px;top:94px;" width="15" height="16" viewBox="0 0 15 16"><rect x="0.500" y="0.500" width="13.500" height="14.500" fill="#fff" stroke="#8a8a8a"/><rect x="0" y="0" width="14.500" height="3.500" fill="#777"/><path d="M7.200 5.500v7 M4 9.500l3.200 3.200l3.200-3.200" fill="none" stroke="#4179b8" stroke-width="1.600"/></svg>
<span id="L44" class="t" style="left:1115px;top:92.5px;height:24px;line-height:24px;font-size:12px;color:#444;transform:scaleX(0.809);">フィル</span>
<svg class="a" style="left:1143.3px;top:101.2px;" width="6" height="4" viewBox="0 0 6 4"><path d="M0 0h6l-3.0 3.5z" fill="#6e6e6e"/></svg>
<svg class="a" style="left:1097px;top:117px;" width="14" height="14" viewBox="0 0 14 14"><path d="M0.500 10l8.500-8.500l4.500 4.500l-8.500 8.500z" fill="#e88a9c"/><path d="M0.500 10l2-2l4.500 4.500l-2 2z" fill="#f3a9b6"/></svg>
<span id="L45" class="t" style="left:1115px;top:115.0px;height:24px;line-height:24px;font-size:12px;color:#444;transform:scaleX(0.739);">クリア</span>
<svg class="a" style="left:1142.7px;top:124.0px;" width="6" height="4" viewBox="0 0 6 4"><path d="M0 0h6l-3.0 3.5z" fill="#6e6e6e"/></svg>
<svg class="a" style="left:1206px;top:75px;" width="30" height="26" viewBox="0 0 30 26"><text x="-0.500" y="10.500" font-size="14.500" font-family="Liberation Sans, sans-serif" fill="#4179b8" stroke="#4179b8" stroke-width=".4">A</text><text x="0.500" y="24" font-size="14.500" font-family="Liberation Sans, sans-serif" fill="#9c5bb5" stroke="#9c5bb5" stroke-width=".4">Z</text><path d="M11.500 6.500h17l-6.500 6.500v7.500l-3.500-2v-5.500z" fill="#808080"/><path d="M13 7.200h14" stroke="#9a9a9a" stroke-width="1"/></svg>
<span id="L46" class="t" style="left:1196px;top:103.0px;height:24px;line-height:24px;font-size:12px;color:#444;transform:scaleX(0.884);">並べ替えと</span>
<span id="L47" class="t" style="left:1195px;top:117.0px;height:24px;line-height:24px;font-size:12px;color:#444;transform:scaleX(0.856);">フィルター</span>
<svg class="a" style="left:1242.0px;top:126.0px;" width="6" height="4" viewBox="0 0 6 4"><path d="M0 0h6l-3.0 3.5z" fill="#6e6e6e"/></svg>
<svg class="a" style="left:1257px;top:73px;" width="28" height="28" viewBox="0 0 28 28"><circle cx="18" cy="9.500" r="8" fill="#fff" stroke="#4179b8" stroke-width="2"/><path d="M12 15.500l-10 10" stroke="#4179b8" stroke-width="3.200" stroke-linecap="round"/></svg>
<span id="L48" class="t" style="left:1255.5px;top:103.0px;height:24px;line-height:24px;font-size:12px;color:#444;transform:scaleX(0.911);">検索と</span>
<span id="L49" class="t" style="left:1254px;top:117.0px;height:24px;line-height:24px;font-size:12px;color:#444;transform:scaleX(1.020);">選択</span>
<svg class="a" style="left:1282.0px;top:126.0px;" width="6" height="4" viewBox="0 0 6 4"><path d="M0 0h6l-3.0 3.5z" fill="#6e6e6e"/></svg>
<span id="L50" class="t" style="left:1180px;top:138.0px;height:24px;line-height:24px;font-size:12px;color:#444;">編集</span>
<div class="a" style="left:1296px;top:69px;width:1px;height:85px;background:#d4d4d4;"></div>
<svg class="a" style="left:1346px;top:147px;" width="11" height="7" viewBox="0 0 11 7"><path d="M0.800 6l4.700-4.700l4.700 4.700" fill="none" stroke="#555" stroke-width="1.600"/></svg>
<div class="a" style="left:5px;top:169px;width:102px;height:31px;background:#fff;border:1px solid #d0d0d0;box-sizing:border-box"></div>
<span id="L51" class="t" style="left:13px;top:173.5px;height:26px;line-height:26px;font-size:13px;color:#444;transform:scaleX(0.947);">J1</span>
<svg class="a" style="left:92.9px;top:182.8px;" width="7" height="4" viewBox="0 0 7 4"><path d="M0 0h7l-3.5 3.5z" fill="#666"/></svg>
<svg class="a" style="left:121px;top:179px;" width="2" height="12" viewBox="0 0 2 12"><rect x="0" y="0" width="2" height="2" fill="#aaa"/><rect x="0" y="5" width="2" height="2" fill="#aaa"/><rect x="0" y="10" width="2" height="2" fill="#aaa"/></svg>
<div class="a" style="left:137px;top:169px;width:110px;height:31px;background:#fff;border:1px solid #d0d0d0;box-sizing:border-box"></div>
<svg class="a" style="left:150px;top:180px;" width="11" height="11" viewBox="0 0 11 11"><path d="M0.500 0.500l10 9.500 M10.500 0.500l-10 9.500" stroke="#b4b4b4" stroke-width="1.600"/></svg>
<svg class="a" style="left:186px;top:180px;" width="13" height="11" viewBox="0 0 13 11"><path d="M0.500 5.500l4 4.300l8-9.300" fill="none" stroke="#b8b8b8" stroke-width="2"/></svg>
<span id="L52" class="t" style="left:222.5px;top:172.0px;height:26px;line-height:26px;font-size:13px;color:#444;font-weight:700;transform:scaleX(1.496);font-style:italic;font-family:'Liberation Serif',serif;">f</span>
<span id="L53" class="t" style="left:228.5px;top:179.5px;height:16px;line-height:16px;font-size:8px;color:#444;font-weight:700;transform:scaleX(1.250);font-style:italic;font-family:'Liberation Serif',serif;">x</span>
<div class="a" style="left:250px;top:169px;width:1111px;height:31px;background:#fff;border:1px solid #d0d0d0;box-sizing:border-box"></div>
<svg class="a" style="left:1348px;top:181.5px;" width="9" height="7" viewBox="0 0 9 7"><path d="M1 1l3.500 3.500l3.500-3.500" fill="none" stroke="#555" stroke-width="1.800"/></svg>
<div id="grid">
<div class="ch" style="left:0;top:0;width:29px;height:25px;border-right-color:#c4c4c4"></div>
<svg class="a" style="left:8px;top:4px" width="17" height="17"><path d="M16.500 0v16.500h-16.500z" fill="#b4b4b4"/></svg>
<div class="ch" style="left:29px;top:0;width:72px;height:25px;line-height:23px;"><span class="lc">A</span></div>
<div class="ch" style="left:101px;top:0;width:73px;height:25px;line-height:23px;"><span class="lc">B</span></div>
<div class="ch" style="left:174px;top:0;width:73px;height:25px;line-height:23px;"><span class="lc">C</span></div>
<div class="ch" style="left:247px;top:0;width:75px;height:25px;line-height:23px;"><span class="lc">D</span></div>
<div class="ch" style="left:322px;top:0;width:254px;height:25px;line-height:23px;"><span class="lc">E</span></div>
<div class="ch" style="left:576px;top:0;width:75px;height:25px;line-height:23px;"><span class="lc">F</span></div>
<div class="ch" style="left:651px;top:0;width:214px;height:25px;line-height:23px;"><span class="lc">G</span></div>
<div class="ch" style="left:865px;top:0;width:109px;height:25px;line-height:23px;"><span class="lc">H</span></div>
<div class="ch" style="left:974px;top:0;width:192px;height:25px;line-height:23px;"><span class="lc">I</span></div>
<div class="ch" style="left:1166px;top:0;width:92px;height:25px;line-height:23px;background:#d3f0e0;color:#217346;border-bottom:2px solid #217346;"><span class="lc">J</span></div>
<div class="ch" style="left:1258px;top:0;width:91px;height:25px;line-height:23px;"><span class="lc">K</span></div>
<div class="rh" style="top:25px;height:25px;line-height:23px"><span class="lc">1</span></div>
<div class="rh" style="top:50px;height:26px;line-height:24px"><span class="lc">2</span></div>
<div class="rh" style="top:76px;height:26px;line-height:24px"><span class="lc">3</span></div>
<div class="rh" style="top:102px;height:25px;line-height:23px"><span class="lc">4</span></div>
<div class="rh" style="top:127px;height:25px;line-height:23px"><span class="lc">5</span></div>
<div class="rh" style="top:152px;height:25px;line-height:23px"><span class="lc">6</span></div>
<div class="rh" style="top:177px;height:25px;line-height:23px"><span class="lc">7</span></div>
<div class="rh" style="top:202px;height:25px;line-height:23px"><span class="lc">8</span></div>
<div class="rh" style="top:227px;height:25px;line-height:23px"><span class="lc">9</span></div>
<div class="rh" style="top:252px;height:25px;line-height:23px"><span class="lc">10</span></div>
<div class="rh" style="top:277px;height:25px;line-height:23px"><span class="lc">11</span></div>
<div class="rh" style="top:302px;height:25px;line-height:23px"><span class="lc">12</span></div>
<div class="rh" style="top:327px;height:25px;line-height:23px"><span class="lc">13</span></div>
<div class="rh" style="top:352px;height:25px;line-height:23px"><span class="lc">14</span></div>
<div class="rh" style="top:377px;height:25px;line-height:23px"><span class="lc">15</span></div>
<div class="rh" style="top:402px;height:25px;line-height:23px"><span class="lc">16</span></div>
<div class="rh" style="top:427px;height:25px;line-height:23px"><span class="lc">17</span></div>
<div class="rh" style="top:452px;height:25px;line-height:23px"><span class="lc">18</span></div>
<div style="left:27px;top:25px;width:2px;height:460px;background:#217346"></div>
<div style="left:29px;top:25px;width:218px;height:25px;line-height:22px;padding-left:2.500px;border-right:1px solid #d4d4d4"><span class="j">エクセル入門受講者一覧</span></div>
<div style="left:247px;top:25px;width:75px;height:25px;border-right:1px solid #d4d4d4"></div>
<div style="left:322px;top:25px;width:254px;height:25px;border-right:1px solid #d4d4d4"></div>
<div style="left:576px;top:25px;width:75px;height:25px;border-right:1px solid #d4d4d4"></div>
<div style="left:651px;top:25px;width:214px;height:25px;border-right:1px solid #d4d4d4"></div>
<div style="left:865px;top:25px;width:109px;height:25px;border-right:1px solid #d4d4d4"></div>
<div style="left:974px;top:25px;width:192px;height:25px;border-right:1px solid #d4d4d4"></div>
<div style="left:1166px;top:25px;width:92px;height:25px;border-right:1px solid #d4d4d4"></div>
<div style="left:1258px;top:25px;width:91px;height:25px;border-right:1px solid #d4d4d4"></div>
<div style="left:29px;top:49px;width:1320px;height:1px;background:#000"></div>
<div class="c h2" style="left:29px;top:50px;width:72px;height:27px;line-height:23px;border-bottom:3px double #000;"><span class="j">会員番号</span></div>
<div class="c h2" style="left:101px;top:50px;width:73px;height:27px;line-height:23px;border-bottom:3px double #000;"><span class="j">姓</span></div>
<div class="c h2" style="left:174px;top:50px;width:73px;height:27px;line-height:23px;border-bottom:3px double #000;"><span class="j">名</span></div>
<div class="c h2" style="left:247px;top:50px;width:75px;height:27px;line-height:23px;border-bottom:3px double #000;"><span class="j">郵便番号</span></div>
<div class="c h2" style="left:322px;top:50px;width:254px;height:27px;line-height:23px;border-bottom:3px double #000;"><span class="j">住所</span></div>
<div class="c h2" style="left:576px;top:50px;width:75px;height:27px;line-height:23px;border-bottom:3px double #000;"><span class="j">番地</span></div>
<div class="c h2" style="left:651px;top:50px;width:214px;height:27px;line-height:23px;border-bottom:3px double #000;"><span class="j">マンション・部屋番号</span></div>
<div class="c h2" style="left:865px;top:50px;width:109px;height:27px;line-height:23px;border-bottom:3px double #000;"><span class="j">電話番号</span></div>
<div class="c h2" style="left:974px;top:50px;width:192px;height:27px;line-height:23px;border-bottom:3px double #000;"><span class="j">メールアドレス</span></div>
<div class="c h2" style="left:1166px;top:50px;width:92px;height:27px;line-height:23px;border-bottom:3px double #000;background:#b9955a;"><span class="j">生年月日</span></div>
<div class="c h2" style="left:1258px;top:50px;width:91px;height:27px;line-height:23px;border-bottom:3px double #000;"><span class="j">入会年月日</span></div>
<div class="c" style="left:29px;top:77px;width:72px;height:25px;line-height:22px"><span class="l" style="letter-spacing:-0.00px;margin-right:-4.83px">1001</span></div>
<div class="c" style="left:101px;top:77px;width:73px;height:25px;line-height:22px"><span class="j">大田原</span></div>
<div class="c" style="left:174px;top:77px;width:73px;height:25px;line-height:22px"><span class="j">陽子</span></div>
<div class="c" style="left:247px;top:77px;width:75px;height:25px;line-height:22px"><span class="l" style="letter-spacing:0.39px;margin-right:-9.59px">162-0041</span></div>
<div class="c" style="left:322px;top:77px;width:254px;height:25px;line-height:22px"><span class="j">東京都新宿区早稲田鶴巻町</span></div>
<div class="c" style="left:576px;top:77px;width:75px;height:25px;line-height:22px"><span class="l" style="letter-spacing:0.95px;margin-right:-8.73px">XXXX-X</span></div>
<div class="c" style="left:651px;top:77px;width:214px;height:25px;line-height:22px"><span class="j">三ノ輪マンションXXX</span></div>
<div class="c" style="left:865px;top:77px;width:109px;height:25px;line-height:22px"><span class="l" style="letter-spacing:0.31px;margin-right:-13.93px">0354XXXXXX</span></div>
<div class="c lk" style="left:974px;top:77px;width:192px;height:25px;line-height:22px"><span class="e">yoko@example.com</span></div>
<div class="c r sel" style="left:1166px;top:77px;width:92px;height:25px;line-height:22px"><span class="l" style="letter-spacing:0.95px;margin-right:-10.80px">1958/3/12</span></div>
<div class="c r" style="left:1258px;top:77px;width:91px;height:25px;line-height:22px"><span class="l" style="letter-spacing:0.95px;margin-right:-10.80px">2016/8/10</span></div>
<div class="c" style="left:29px;top:102px;width:72px;height:25px;line-height:22px"><span class="l" style="letter-spacing:-0.00px;margin-right:-4.83px">1002</span></div>
<div class="c" style="left:101px;top:102px;width:73px;height:25px;line-height:22px"><span class="j">市原</span></div>
<div class="c" style="left:174px;top:102px;width:73px;height:25px;line-height:22px"><span class="j">君江</span></div>
<div class="c" style="left:247px;top:102px;width:75px;height:25px;line-height:22px"><span class="l" style="letter-spacing:0.39px;margin-right:-9.59px">226-0026</span></div>
<div class="c" style="left:322px;top:102px;width:254px;height:25px;line-height:22px"><span class="j">神奈川県横浜市緑区長津田町</span></div>
<div class="c" style="left:576px;top:102px;width:75px;height:25px;line-height:22px"><span class="l" style="letter-spacing:1.36px;margin-right:-6.22px">1-1-X</span></div>
<div class="c" style="left:651px;top:102px;width:214px;height:25px;line-height:22px"></div>
<div class="c" style="left:865px;top:102px;width:109px;height:25px;line-height:22px"><span class="l" style="letter-spacing:0.36px;margin-right:-14.24px">045XXXXXXX</span></div>
<div class="c lk" style="left:974px;top:102px;width:192px;height:25px;line-height:22px"><span class="e">kimie@example.com</span></div>
<div class="c r sel" style="left:1166px;top:102px;width:92px;height:25px;line-height:22px"><span class="l" style="letter-spacing:0.95px;margin-right:-10.80px">1964/10/4</span></div>
<div class="c r" style="left:1258px;top:102px;width:91px;height:25px;line-height:22px"><span class="l" style="letter-spacing:0.95px;margin-right:-10.80px">2016/8/21</span></div>
<div class="c" style="left:29px;top:127px;width:72px;height:25px;line-height:22px"><span class="l" style="letter-spacing:-0.00px;margin-right:-4.83px">1003</span></div>
<div class="c" style="left:101px;top:127px;width:73px;height:25px;line-height:22px"><span class="j">大河内</span></div>
<div class="c" style="left:174px;top:127px;width:73px;height:25px;line-height:22px"><span class="j">武久</span></div>
<div class="c" style="left:247px;top:127px;width:75px;height:25px;line-height:22px"><span class="l" style="letter-spacing:0.39px;margin-right:-9.59px">252-0222</span></div>
<div class="c" style="left:322px;top:127px;width:254px;height:25px;line-height:22px"><span class="j">神奈川県相模原市中央区由野台</span></div>
<div class="c" style="left:576px;top:127px;width:75px;height:25px;line-height:22px"><span class="l" style="letter-spacing:1.57px;margin-right:-6.84px">X-X-X</span></div>
<div class="c" style="left:651px;top:127px;width:214px;height:25px;line-height:22px"><span class="j">コーポコスモXXX</span></div>
<div class="c" style="left:865px;top:127px;width:109px;height:25px;line-height:22px"><span class="l" style="letter-spacing:0.36px;margin-right:-14.24px">042XXXXXXX</span></div>
<div class="c lk" style="left:974px;top:127px;width:192px;height:25px;line-height:22px"><span class="e">take_okoi@example.com</span></div>
<div class="c r sel" style="left:1166px;top:127px;width:92px;height:25px;line-height:22px"><span class="l" style="letter-spacing:0.95px;margin-right:-10.80px">1985/5/18</span></div>
<div class="c r" style="left:1258px;top:127px;width:91px;height:25px;line-height:22px"><span class="l" style="letter-spacing:1.07px;margin-right:-9.59px">2016/9/1</span></div>
<div class="c" style="left:29px;top:152px;width:72px;height:25px;line-height:22px"><span class="l" style="letter-spacing:-0.00px;margin-right:-4.83px">1004</span></div>
<div class="c" style="left:101px;top:152px;width:73px;height:25px;line-height:22px"><span class="j">香川</span></div>
<div class="c" style="left:174px;top:152px;width:73px;height:25px;line-height:22px"><span class="j">知佳</span></div>
<div class="c" style="left:247px;top:152px;width:75px;height:25px;line-height:22px"><span class="l" style="letter-spacing:0.39px;margin-right:-9.59px">690-0873</span></div>
<div class="c" style="left:322px;top:152px;width:254px;height:25px;line-height:22px"><span class="j">島根県松江市内中原町</span></div>
<div class="c" style="left:576px;top:152px;width:75px;height:25px;line-height:22px"><span class="l" style="letter-spacing:1.17px;margin-right:-5.69px">X-XX</span></div>
<div class="c" style="left:651px;top:152px;width:214px;height:25px;line-height:22px"></div>
<div class="c" style="left:865px;top:152px;width:109px;height:25px;line-height:22px"><span class="l" style="letter-spacing:0.31px;margin-right:-13.93px">0852XXXXXX</span></div>
<div class="c lk" style="left:974px;top:152px;width:192px;height:25px;line-height:22px"><span class="e">kagawa@xxxx.jp</span></div>
<div class="c r sel" style="left:1166px;top:152px;width:92px;height:25px;line-height:22px"><span class="l" style="letter-spacing:0.85px;margin-right:-12.01px">1973/11/18</span></div>
<div class="c r" style="left:1258px;top:152px;width:91px;height:25px;line-height:22px"><span class="l" style="letter-spacing:0.95px;margin-right:-10.80px">2016/9/12</span></div>
<div class="c" style="left:29px;top:177px;width:72px;height:25px;line-height:22px"><span class="l" style="letter-spacing:-0.00px;margin-right:-4.83px">1005</span></div>
<div class="c" style="left:101px;top:177px;width:73px;height:25px;line-height:22px"><span class="j">木村</span></div>
<div class="c" style="left:174px;top:177px;width:73px;height:25px;line-height:22px"><span class="j">由利子</span></div>
<div class="c" style="left:247px;top:177px;width:75px;height:25px;line-height:22px"><span class="l" style="letter-spacing:0.39px;margin-right:-9.59px">812-0053</span></div>
<div class="c" style="left:322px;top:177px;width:254px;height:25px;line-height:22px"><span class="j">福岡県福岡市東区箱崎</span></div>
<div class="c" style="left:576px;top:177px;width:75px;height:25px;line-height:22px"><span class="l" style="letter-spacing:1.22px;margin-right:-7.74px">2-1X-X</span></div>
<div class="c" style="left:651px;top:177px;width:214px;height:25px;line-height:22px"><span class="j">箱崎コーポXXX</span></div>
<div class="c" style="left:865px;top:177px;width:109px;height:25px;line-height:22px"><span class="l" style="letter-spacing:0.36px;margin-right:-14.24px">092XXXXXXX</span></div>
<div class="c lk" style="left:974px;top:177px;width:192px;height:25px;line-height:22px"><span class="e">yurikim@example.com</span></div>
<div class="c r sel" style="left:1166px;top:177px;width:92px;height:25px;line-height:22px"><span class="l" style="letter-spacing:1.07px;margin-right:-9.59px">1964/8/5</span></div>
<div class="c r" style="left:1258px;top:177px;width:91px;height:25px;line-height:22px"><span class="l" style="letter-spacing:0.95px;margin-right:-10.80px">2016/9/24</span></div>
<div class="c" style="left:29px;top:202px;width:72px;height:25px;line-height:22px"><span class="l" style="letter-spacing:-0.00px;margin-right:-4.83px">1006</span></div>
<div class="c" style="left:101px;top:202px;width:73px;height:25px;line-height:22px"><span class="j">飯泉</span></div>
<div class="c" style="left:174px;top:202px;width:73px;height:25px;line-height:22px"><span class="j">昭義</span></div>
<div class="c" style="left:247px;top:202px;width:75px;height:25px;line-height:22px"><span class="l" style="letter-spacing:0.39px;margin-right:-9.59px">060-0812</span></div>
<div class="c" style="left:322px;top:202px;width:254px;height:25px;line-height:22px"><span class="j">北海道札幌市北区北十二条西</span></div>
<div class="c" style="left:576px;top:202px;width:75px;height:25px;line-height:22px"><span class="l" style="letter-spacing:1.57px;margin-right:-6.84px">X-X-X</span></div>
<div class="c" style="left:651px;top:202px;width:214px;height:25px;line-height:22px"><span class="j">北ハイムXXX</span></div>
<div class="c" style="left:865px;top:202px;width:109px;height:25px;line-height:22px"><span class="l" style="letter-spacing:0.36px;margin-right:-14.24px">011XXXXXXX</span></div>
<div class="c lk" style="left:974px;top:202px;width:192px;height:25px;line-height:22px"><span class="e">zumi_aki@xxxx.com</span></div>
<div class="c r sel" style="left:1166px;top:202px;width:92px;height:25px;line-height:22px"><span class="l" style="letter-spacing:0.95px;margin-right:-10.80px">1980/4/26</span></div>
<div class="c r" style="left:1258px;top:202px;width:91px;height:25px;line-height:22px"><span class="l" style="letter-spacing:0.95px;margin-right:-10.80px">2016/10/2</span></div>
<div class="c" style="left:29px;top:227px;width:72px;height:25px;line-height:22px"><span class="l" style="letter-spacing:-0.00px;margin-right:-4.83px">1007</span></div>
<div class="c" style="left:101px;top:227px;width:73px;height:25px;line-height:22px"><span class="j">西山</span></div>
<div class="c" style="left:174px;top:227px;width:73px;height:25px;line-height:22px"><span class="j">平蔵</span></div>
<div class="c" style="left:247px;top:227px;width:75px;height:25px;line-height:22px"><span class="l" style="letter-spacing:0.39px;margin-right:-9.59px">098-6758</span></div>
<div class="c" style="left:322px;top:227px;width:254px;height:25px;line-height:22px"><span class="j">北海道稚内市宗谷岬</span></div>
<div class="c" style="left:576px;top:227px;width:75px;height:25px;line-height:22px"><span class="l" style="letter-spacing:0.73px;margin-right:-6.28px">101-X</span></div>
<div class="c" style="left:651px;top:227px;width:214px;height:25px;line-height:22px"></div>
<div class="c" style="left:865px;top:227px;width:109px;height:25px;line-height:22px"><span class="l" style="letter-spacing:0.31px;margin-right:-13.93px">0162XXXXXX</span></div>
<div class="c lk" style="left:974px;top:227px;width:192px;height:25px;line-height:22px"><span class="e">heikichi11@xxxx.jp</span></div>
<div class="c r sel" style="left:1166px;top:227px;width:92px;height:25px;line-height:22px"><span class="l" style="letter-spacing:0.95px;margin-right:-10.80px">1969/7/19</span></div>
<div class="c r" style="left:1258px;top:227px;width:91px;height:25px;line-height:22px"><span class="l" style="letter-spacing:0.85px;margin-right:-12.01px">2016/10/14</span></div>
<div class="c" style="left:29px;top:252px;width:72px;height:25px;line-height:22px"><span class="l" style="letter-spacing:-0.00px;margin-right:-4.83px">1008</span></div>
<div class="c" style="left:101px;top:252px;width:73px;height:25px;line-height:22px"><span class="j">山本</span></div>
<div class="c" style="left:174px;top:252px;width:73px;height:25px;line-height:22px"><span class="j">環</span></div>
<div class="c" style="left:247px;top:252px;width:75px;height:25px;line-height:22px"><span class="l" style="letter-spacing:0.39px;margin-right:-9.59px">604-8436</span></div>
<div class="c" style="left:322px;top:252px;width:254px;height:25px;line-height:22px"><span class="j">京都府京都市中京区西ノ京下合町</span></div>
<div class="c" style="left:576px;top:252px;width:75px;height:25px;line-height:22px"><span class="l" style="letter-spacing:0.95px;margin-right:-8.73px">XXXX-X</span></div>
<div class="c" style="left:651px;top:252px;width:214px;height:25px;line-height:22px"></div>
<div class="c" style="left:865px;top:252px;width:109px;height:25px;line-height:22px"><span class="l" style="letter-spacing:0.36px;margin-right:-14.24px">075XXXXXXX</span></div>
<div class="c lk" style="left:974px;top:252px;width:192px;height:25px;line-height:22px"><span class="e">tamayama@xxx.com</span></div>
<div class="c r sel" style="left:1166px;top:252px;width:92px;height:25px;line-height:22px"><span class="l" style="letter-spacing:0.95px;margin-right:-10.80px">1979/11/2</span></div>
<div class="c r" style="left:1258px;top:252px;width:91px;height:25px;line-height:22px"><span class="l" style="letter-spacing:0.85px;margin-right:-12.01px">2016/10/25</span></div>
<div class="c" style="left:29px;top:277px;width:72px;height:25px;line-height:22px"><span class="l" style="letter-spacing:-0.00px;margin-right:-4.83px">1009</span></div>
<div class="c" style="left:101px;top:277px;width:73px;height:25px;line-height:22px"><span class="j">萩原</span></div>
<div class="c" style="left:174px;top:277px;width:73px;height:25px;line-height:22px"><span class="j">幸雄</span></div>
<div class="c" style="left:247px;top:277px;width:75px;height:25px;line-height:22px"><span class="l" style="letter-spacing:0.39px;margin-right:-9.59px">940-0063</span></div>
<div class="c" style="left:322px;top:277px;width:254px;height:25px;line-height:22px"><span class="j">新潟県長岡市旭町</span></div>
<div class="c" style="left:576px;top:277px;width:75px;height:25px;line-height:22px"><span class="l" style="letter-spacing:1.57px;margin-right:-6.84px">X-X-X</span></div>
<div class="c" style="left:651px;top:277px;width:214px;height:25px;line-height:22px"><span class="j">コーポフェニックスXXX</span></div>
<div class="c" style="left:865px;top:277px;width:109px;height:25px;line-height:22px"><span class="l" style="letter-spacing:0.31px;margin-right:-13.93px">0258XXXXXX</span></div>
<div class="c lk" style="left:974px;top:277px;width:192px;height:25px;line-height:22px"><span class="e">yukii-o@example.com</span></div>
<div class="c r sel" style="left:1166px;top:277px;width:92px;height:25px;line-height:22px"><span class="l" style="letter-spacing:0.95px;margin-right:-10.80px">1953/2/27</span></div>
<div class="c r" style="left:1258px;top:277px;width:91px;height:25px;line-height:22px"><span class="l" style="letter-spacing:0.85px;margin-right:-12.01px">2016/10/30</span></div>
<div class="c" style="left:29px;top:302px;width:72px;height:25px;line-height:22px"><span class="l" style="letter-spacing:-0.00px;margin-right:-4.83px">1010</span></div>
<div class="c" style="left:101px;top:302px;width:73px;height:25px;line-height:22px"><span class="j">都筑</span></div>
<div class="c" style="left:174px;top:302px;width:73px;height:25px;line-height:22px"><span class="j">京太郎</span></div>
<div class="c" style="left:247px;top:302px;width:75px;height:25px;line-height:22px"><span class="l" style="letter-spacing:0.39px;margin-right:-9.59px">850-0036</span></div>
<div class="c" style="left:322px;top:302px;width:254px;height:25px;line-height:22px"><span class="j">長崎県長崎市五島町</span></div>
<div class="c" style="left:576px;top:302px;width:75px;height:25px;line-height:22px"><span class="l" style="letter-spacing:0.95px;margin-right:-8.73px">X-XXXX</span></div>
<div class="c" style="left:651px;top:302px;width:214px;height:25px;line-height:22px"></div>
<div class="c" style="left:865px;top:302px;width:109px;height:25px;line-height:22px"><span class="l" style="letter-spacing:0.31px;margin-right:-13.93px">0959XXXXXX</span></div>
<div class="c lk" style="left:974px;top:302px;width:192px;height:25px;line-height:22px"><span class="e">tuzukiyo@xxx.jp</span></div>
<div class="c r sel" style="left:1166px;top:302px;width:92px;height:25px;line-height:22px"><span class="l" style="letter-spacing:0.85px;margin-right:-12.01px">1958/12/15</span></div>
<div class="c r" style="left:1258px;top:302px;width:91px;height:25px;line-height:22px"><span class="l" style="letter-spacing:0.95px;margin-right:-10.80px">2016/11/7</span></div>
<div class="c" style="left:29px;top:327px;width:72px;height:25px;line-height:22px"><span class="l" style="letter-spacing:-0.00px;margin-right:-4.83px">1011</span></div>
<div class="c" style="left:101px;top:327px;width:73px;height:25px;line-height:22px"><span class="j">奈良沢</span></div>
<div class="c" style="left:174px;top:327px;width:73px;height:25px;line-height:22px"><span class="j">亮太</span></div>
<div class="c" style="left:247px;top:327px;width:75px;height:25px;line-height:22px"><span class="l" style="letter-spacing:0.39px;margin-right:-9.59px">320-0043</span></div>
<div class="c" style="left:322px;top:327px;width:254px;height:25px;line-height:22px"><span class="j">栃木県宇都宮市桜</span></div>
<div class="c" style="left:576px;top:327px;width:75px;height:25px;line-height:22px"><span class="l" style="letter-spacing:1.13px;margin-right:-7.43px">1-X-20</span></div>
<div class="c" style="left:651px;top:327px;width:214px;height:25px;line-height:22px"></div>
<div class="c" style="left:865px;top:327px;width:109px;height:25px;line-height:22px"><span class="l" style="letter-spacing:0.31px;margin-right:-13.93px">0286XXXXXX</span></div>
<div class="c lk" style="left:974px;top:327px;width:192px;height:25px;line-height:22px"><span class="e">ryonara@example.com</span></div>
<div class="c r sel" style="left:1166px;top:327px;width:92px;height:25px;line-height:22px"><span class="l" style="letter-spacing:0.95px;margin-right:-10.80px">1977/9/10</span></div>
<div class="c r" style="left:1258px;top:327px;width:91px;height:25px;line-height:22px"><span class="l" style="letter-spacing:0.85px;margin-right:-12.01px">2016/11/15</span></div>
<div class="c" style="left:29px;top:352px;width:72px;height:25px;line-height:22px"><span class="l" style="letter-spacing:-0.00px;margin-right:-4.83px">1012</span></div>
<div class="c" style="left:101px;top:352px;width:73px;height:25px;line-height:22px"><span class="j">高橋</span></div>
<div class="c" style="left:174px;top:352px;width:73px;height:25px;line-height:22px"><span class="j">裕子</span></div>
<div class="c" style="left:247px;top:352px;width:75px;height:25px;line-height:22px"><span class="l" style="letter-spacing:0.39px;margin-right:-9.59px">230-0051</span></div>
<div class="c" style="left:322px;top:352px;width:254px;height:25px;line-height:22px"><span class="j">神奈川県横浜市鶴見区鶴見中央</span></div>
<div class="c" style="left:576px;top:352px;width:75px;height:25px;line-height:22px"><span class="l" style="letter-spacing:1.22px;margin-right:-7.74px">X-10-X</span></div>
<div class="c" style="left:651px;top:352px;width:214px;height:25px;line-height:22px"><span class="j">鶴見マンションＡ棟　XXX号</span></div>
<div class="c" style="left:865px;top:352px;width:109px;height:25px;line-height:22px"><span class="l" style="letter-spacing:0.36px;margin-right:-14.24px">045XXXXXXX</span></div>
<div class="c lk" style="left:974px;top:352px;width:192px;height:25px;line-height:22px"><span class="e">yukota@xxxx.com</span></div>
<div class="c r sel" style="left:1166px;top:352px;width:92px;height:25px;line-height:22px"><span class="l" style="letter-spacing:0.85px;margin-right:-12.01px">1983/10/29</span></div>
<div class="c r" style="left:1258px;top:352px;width:91px;height:25px;line-height:22px"><span class="l" style="letter-spacing:0.85px;margin-right:-12.01px">2016/11/29</span></div>
<div class="c" style="left:29px;top:377px;width:72px;height:25px;line-height:22px"><span class="l" style="letter-spacing:-0.00px;margin-right:-4.83px">1013</span></div>
<div class="c" style="left:101px;top:377px;width:73px;height:25px;line-height:22px"><span class="j">竹原</span></div>
<div class="c" style="left:174px;top:377px;width:73px;height:25px;line-height:22px"><span class="j">美紀子</span></div>
<div class="c" style="left:247px;top:377px;width:75px;height:25px;line-height:22px"><span class="l" style="letter-spacing:0.39px;margin-right:-9.59px">980-0811</span></div>
<div class="c" style="left:322px;top:377px;width:254px;height:25px;line-height:22px"><span class="j">宮城県仙台市青葉区一番町</span></div>
<div class="c" style="left:576px;top:377px;width:75px;height:25px;line-height:22px"><span class="l" style="letter-spacing:1.36px;margin-right:-6.22px">1-1-X</span></div>
<div class="c" style="left:651px;top:377px;width:214px;height:25px;line-height:22px"></div>
<div class="c" style="left:865px;top:377px;width:109px;height:25px;line-height:22px"><span class="l" style="letter-spacing:0.36px;margin-right:-14.24px">022XXXXXXX</span></div>
<div class="c lk" style="left:974px;top:377px;width:192px;height:25px;line-height:22px"><span class="e">takehara@xxx.jp</span></div>
<div class="c r sel" style="left:1166px;top:377px;width:92px;height:25px;line-height:22px"><span class="l" style="letter-spacing:0.95px;margin-right:-10.80px">1961/7/31</span></div>
<div class="c r" style="left:1258px;top:377px;width:91px;height:25px;line-height:22px"><span class="l" style="letter-spacing:0.95px;margin-right:-10.80px">2016/12/8</span></div>
<div class="c" style="left:29px;top:402px;width:72px;height:25px;line-height:22px"><span class="l" style="letter-spacing:-0.00px;margin-right:-4.83px">1014</span></div>
<div class="c" style="left:101px;top:402px;width:73px;height:25px;line-height:22px"><span class="j">宇野沢</span></div>
<div class="c" style="left:174px;top:402px;width:73px;height:25px;line-height:22px"><span class="j">美奈</span></div>
<div class="c" style="left:247px;top:402px;width:75px;height:25px;line-height:22px"><span class="l" style="letter-spacing:0.39px;margin-right:-9.59px">790-0845</span></div>
<div class="c" style="left:322px;top:402px;width:254px;height:25px;line-height:22px"><span class="j">愛媛県松山市道後今市</span></div>
<div class="c" style="left:576px;top:402px;width:75px;height:25px;line-height:22px"><span class="l" style="letter-spacing:0.73px;margin-right:-6.28px">121-X</span></div>
<div class="c" style="left:651px;top:402px;width:214px;height:25px;line-height:22px"><span class="j">スプリングハイツXXX</span></div>
<div class="c" style="left:865px;top:402px;width:109px;height:25px;line-height:22px"><span class="l" style="letter-spacing:0.31px;margin-right:-13.93px">0899XXXXXX</span></div>
<div class="c lk" style="left:974px;top:402px;width:192px;height:25px;line-height:22px"><span class="e">unomi@excample.com</span></div>
<div class="c r sel" style="left:1166px;top:402px;width:92px;height:25px;line-height:22px"><span class="l" style="letter-spacing:1.07px;margin-right:-9.59px">1981/5/2</span></div>
<div class="c r" style="left:1258px;top:402px;width:91px;height:25px;line-height:22px"><span class="l" style="letter-spacing:0.85px;margin-right:-12.01px">2016/12/19</span></div>
<div class="c" style="left:29px;top:427px;width:72px;height:25px;line-height:22px"><span class="l" style="letter-spacing:-0.00px;margin-right:-4.83px">1015</span></div>
<div class="c" style="left:101px;top:427px;width:73px;height:25px;line-height:22px"><span class="j">湯河原</span></div>
<div class="c" style="left:174px;top:427px;width:73px;height:25px;line-height:22px"><span class="j">恵子</span></div>
<div class="c" style="left:247px;top:427px;width:75px;height:25px;line-height:22px"><span class="l" style="letter-spacing:0.39px;margin-right:-9.59px">162-0041</span></div>
<div class="c" style="left:322px;top:427px;width:254px;height:25px;line-height:22px"><span class="j">東京都新宿区早稲田鶴巻町</span></div>
<div class="c" style="left:576px;top:427px;width:75px;height:25px;line-height:22px"><span class="l" style="letter-spacing:0.95px;margin-right:-8.73px">XXXX-X</span></div>
<div class="c" style="left:651px;top:427px;width:214px;height:25px;line-height:22px"></div>
<div class="c" style="left:865px;top:427px;width:109px;height:25px;line-height:22px"><span class="l" style="letter-spacing:0.31px;margin-right:-13.93px">0354XXXXXX</span></div>
<div class="c lk" style="left:974px;top:427px;width:192px;height:25px;line-height:22px"><span class="e">keiko@example.com</span></div>
<div class="c r sel" style="left:1166px;top:427px;width:92px;height:25px;line-height:22px"><span class="l" style="letter-spacing:0.95px;margin-right:-10.80px">1958/3/12</span></div>
<div class="c r" style="left:1258px;top:427px;width:91px;height:25px;line-height:22px"><span class="l" style="letter-spacing:0.95px;margin-right:-10.80px">2016/8/10</span></div>
<div class="c" style="left:29px;top:452px;width:72px;height:25px;line-height:22px"><span class="l" style="letter-spacing:-0.00px;margin-right:-4.83px">1016</span></div>
<div class="c" style="left:101px;top:452px;width:73px;height:25px;line-height:22px"><span class="j">市川</span></div>
<div class="c" style="left:174px;top:452px;width:73px;height:25px;line-height:22px"><span class="j">幸恵</span></div>
<div class="c" style="left:247px;top:452px;width:75px;height:25px;line-height:22px"><span class="l" style="letter-spacing:0.39px;margin-right:-9.59px">226-0026</span></div>
<div class="c" style="left:322px;top:452px;width:254px;height:25px;line-height:22px"><span class="j">神奈川県横浜市緑区長津田町</span></div>
<div class="c" style="left:576px;top:452px;width:75px;height:25px;line-height:22px"><span class="l" style="letter-spacing:1.36px;margin-right:-6.22px">1-1-X</span></div>
<div class="c" style="left:651px;top:452px;width:214px;height:25px;line-height:22px"><span class="j">Bマンション1-XXX</span></div>
<div class="c" style="left:865px;top:452px;width:109px;height:25px;line-height:22px"><span class="l" style="letter-spacing:0.36px;margin-right:-14.24px">045XXXXXXX</span></div>
<div class="c lk" style="left:974px;top:452px;width:192px;height:25px;line-height:22px"><span class="e">ichikawa@example.com</span></div>
<div class="c r sel" style="left:1166px;top:452px;width:92px;height:25px;line-height:22px"><span class="l" style="letter-spacing:0.95px;margin-right:-10.80px">1964/10/4</span></div>
<div class="c r" style="left:1258px;top:452px;width:91px;height:25px;line-height:22px"><span class="l" style="letter-spacing:0.95px;margin-right:-10.80px">2016/8/21</span></div>
</div>
<div class="a" style="left:1344px;top:234px;width:1px;height:444px;background:#b4b4b4;"></div>
<div class="a" style="left:1348px;top:226px;width:15px;height:439px;background:#dcdcdc;"></div>
<div class="a" style="left:1348px;top:212px;width:15px;height:15px;background:#fff;border:1px solid #ababab;box-sizing:border-box"></div>
<svg class="a" style="left:1352px;top:217.5px;" width="7" height="4" viewBox="0 0 7 4"><path d="M0 4l3.500-4l3.500 4z" fill="#777"/></svg>
<div class="a" style="left:1348px;top:228px;width:15px;height:238px;background:#fff;border:1px solid #b4b4b4;box-sizing:border-box"></div>
<div class="a" style="left:1348px;top:664px;width:15px;height:15px;background:#fff;border:1px solid #ababab;box-sizing:border-box"></div>
<svg class="a" style="left:1352px;top:670px;" width="7" height="4" viewBox="0 0 7 4"><path d="M0 0h7l-3.500 4z" fill="#777"/></svg>
<div class="a" style="left:0px;top:679px;width:1366px;height:27px;background:#e6e6e6;"></div>
<div class="a" style="left:0px;top:678px;width:1345px;height:1px;background:#c8c8c8;"></div>
<svg class="a" style="left:26.5px;top:687px;" width="5" height="9" viewBox="0 0 5 9"><path d="M5 0v9l-5-4.500z" fill="#c2c2c2"/></svg>
<svg class="a" style="left:55.5px;top:687px;" width="5" height="9" viewBox="0 0 5 9"><path d="M0 0v9l5-4.500z" fill="#c2c2c2"/></svg>
<div class="a" style="left:100px;top:679px;width:77px;height:24px;background:#fff;border-bottom:2px solid #217346;border-left:1px solid #c4c4c4;border-right:1px solid #c4c4c4;box-sizing:border-box"></div>
<span id="L54" class="t" style="left:112px;top:679.0px;height:26px;line-height:26px;font-size:13px;color:#217346;">会員名簿</span>
<span id="L55" class="t" style="left:187px;top:679.0px;height:26px;line-height:26px;font-size:13px;color:#444;transform:scaleX(0.942);">セミナー参加希望調査</span>
<span id="L56" class="t" style="left:330px;top:679.0px;height:26px;line-height:26px;font-size:13px;color:#444;">都道府県</span>
<span id="L57" class="t" style="left:406px;top:679.0px;height:26px;line-height:26px;font-size:13px;color:#444;">全角</span>
<span id="L58" class="t" style="left:456px;top:679.0px;height:26px;line-height:26px;font-size:13px;color:#444;">年齢一覧</span>
<span id="L59" class="t" style="left:532px;top:679.0px;height:26px;line-height:26px;font-size:13px;color:#444;transform:scaleX(0.949);">テーブル作成前</span>
<span id="L60" class="t" style="left:640px;top:679.0px;height:26px;line-height:26px;font-size:13px;color:#444;transform:scaleX(0.943);">テーブル_完成</span>
<div class="a" style="left:318px;top:682px;width:1px;height:19px;background:#ababab;"></div>
<div class="a" style="left:394px;top:682px;width:1px;height:19px;background:#ababab;"></div>
<div class="a" style="left:444px;top:682px;width:1px;height:19px;background:#ababab;"></div>
<div class="a" style="left:520px;top:682px;width:1px;height:19px;background:#ababab;"></div>
<div class="a" style="left:627px;top:682px;width:1px;height:19px;background:#ababab;"></div>
<div class="a" style="left:729px;top:682px;width:1px;height:19px;background:#ababab;"></div>
<svg class="a" style="left:762px;top:683px;" width="18" height="18" viewBox="0 0 18 18"><circle cx="9" cy="9" r="7.800" fill="none" stroke="#767676" stroke-width="1.200"/><path d="M9 5v8 M5 9h8" stroke="#767676" stroke-width="1.600"/></svg>
<svg class="a" style="left:819px;top:686px;" width="2" height="12" viewBox="0 0 2 12"><rect x="0" y="0" width="2" height="2" fill="#aaa"/><rect x="0" y="5" width="2" height="2" fill="#aaa"/><rect x="0" y="10" width="2" height="2" fill="#aaa"/></svg>
<div class="a" style="left:836px;top:685px;width:509px;height:15px;background:#dcdcdc;"></div>
<div class="a" style="left:836px;top:685px;width:15px;height:15px;background:#fff;border:1px solid #ababab;box-sizing:border-box"></div>
<svg class="a" style="left:841px;top:689px;" width="4" height="7" viewBox="0 0 4 7"><path d="M4 0v7l-4-3.500z" fill="#555"/></svg>
<div class="a" style="left:851px;top:685px;width:368px;height:15px;background:#fff;border:1px solid #c6c6c6;box-sizing:border-box"></div>
<div class="a" style="left:1330px;top:685px;width:15px;height:15px;background:#fff;border:1px solid #ababab;box-sizing:border-box"></div>
<svg class="a" style="left:1336px;top:689px;" width="4" height="7" viewBox="0 0 4 7"><path d="M0 0v7l4-3.500z" fill="#555"/></svg>
<div class="a" style="left:0px;top:706px;width:1366px;height:22px;background:#f1f1f1;"></div>
<div class="a" style="left:0px;top:706px;width:1366px;height:1px;background:#cdcdcd;"></div>
<span id="L61" class="t" style="left:7px;top:706.0px;height:24px;line-height:24px;font-size:12px;color:#444;transform:scaleX(0.989);">準備完了</span>
<svg class="a" style="left:75px;top:710px;" width="13" height="13" viewBox="0 0 13 13"><circle cx="3.500" cy="3.500" r="3" fill="#777"/><path d="M7 2.500h5.500v10h-9.500v-5" fill="none" stroke="#777" stroke-width="1"/><path d="M5 8h6 M5 10.500h6 M7 6v6 M9.500 6v6" stroke="#777" stroke-width="1" stroke-dasharray="1.500 1"/></svg>
<span id="L62" class="t" style="left:750px;top:706.0px;height:24px;line-height:24px;font-size:12px;color:#444;transform:scaleX(1.062);">平均: 25922.32143</span>
<span id="L63" class="t" style="left:872px;top:706.0px;height:24px;line-height:24px;font-size:12px;color:#444;transform:scaleX(0.965);">データの個数: 29</span>
<span id="L64" class="t" style="left:973px;top:706.0px;height:24px;line-height:24px;font-size:12px;color:#444;transform:scaleX(1.075);">合計: 725825</span>
<div class="a" style="left:1068px;top:707px;width:37px;height:21px;background:#cacaca;"></div>
<svg class="a" style="left:1080px;top:710px;" width="13" height="13" viewBox="0 0 13 13"><path d="M0.600 0.600h11.800v11.800h-11.800z M0.600 4.500h11.800 M0.600 8.500h11.800 M4.500 0.600v11.800 M8.500 0.600v11.800" fill="none" stroke="#6a6a6a" stroke-width="1.200"/></svg>
<svg class="a" style="left:1118px;top:710px;" width="14" height="13" viewBox="0 0 14 13"><path d="M0.500 0.500h13v12h-13z" fill="none" stroke="#666"/><path d="M3.500 3.500h7v6h-7z" fill="none" stroke="#666" stroke-width="1"/><path d="M5 5.500h4 M5 7.500h4" stroke="#777" stroke-width="1"/></svg>
<svg class="a" style="left:1156px;top:710px;" width="14" height="13" viewBox="0 0 14 13"><path d="M0.500 0.500h13v12h-13z M4.500 0.500v6h5v-6 M0.500 6.500h4" fill="none" stroke="#666" stroke-width="1"/></svg>
<div class="a" style="left:1187px;top:716px;width:6.5px;height:2px;background:#555;"></div>
<div class="a" style="left:1197px;top:717px;width:99px;height:1px;background:#8a8a8a;"></div>
<div class="a" style="left:1244.5px;top:711px;width:4px;height:11px;background:#555;"></div>
<svg class="a" style="left:1300px;top:712.5px;" width="9" height="9" viewBox="0 0 9 9"><path d="M4.500 0v9 M0 4.500h9" stroke="#555" stroke-width="1.800"/></svg>
<span id="L65" class="t" style="left:1325.5px;top:706.0px;height:24px;line-height:24px;font-size:12px;color:#444;transform:scaleX(1.058);">100%</span>
<svg class="a" style="left:1160px;top:240px;" width="20" height="30" viewBox="0 0 20 30"><path d="M0.500 9.500h17 M3.500 6.500l-3 3l3 3 M14.500 6.500l3 3l-3 3" fill="none" stroke="#000" stroke-width="1.200"/><path d="M8.500 3v13" stroke="#000" stroke-width="1"/><path d="M4 2v21l4.800-4.200l4.200 9.200l3-1.300l-4-9l6 .3z" fill="#fff" stroke="#000" stroke-width="1"/></svg>
<div class="a" style="left:1162px;top:203px;width:101px;height:482px;border:7px solid #ff2800;border-radius:4px;box-sizing:border-box"></div>
<div class="a" style="left:1186.8px;top:154.3px;width:42px;height:42px;background:#fff;border-radius:50%;box-shadow:0.5px 1px 3px rgba(0,0,0,.4)"></div>
<span class="t" style="left:1187.800px;top:156.800px;width:40px;height:40px;line-height:40px;text-align:center;font-size:37.300px;color:#ff2800;font-weight:900">①</span>
</body></html>
